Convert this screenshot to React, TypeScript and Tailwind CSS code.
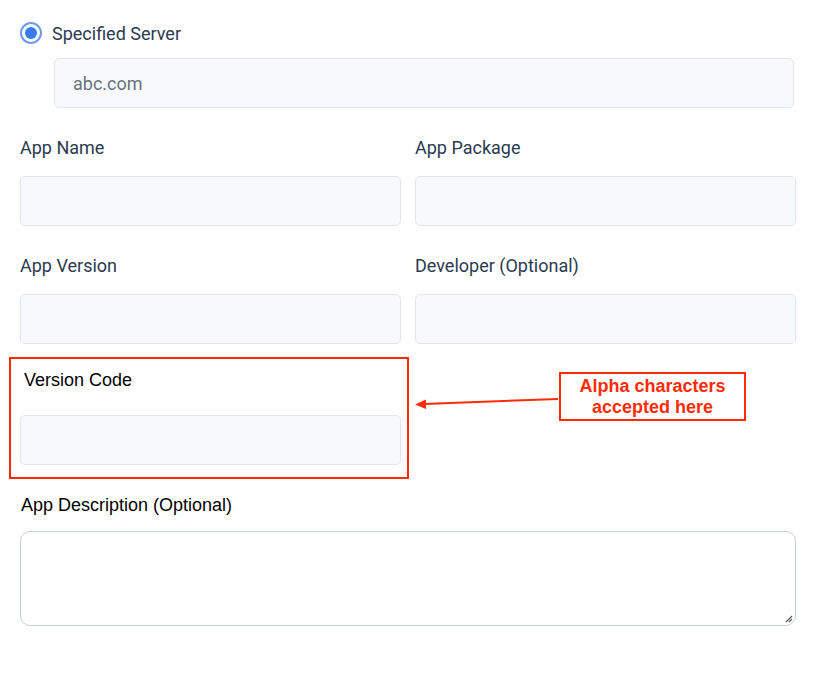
export default function App() {
  const label = "h-5 text-[18px] leading-5 text-[#2b3a50]";
  const input = "h-[50px] w-full rounded-[5px] border border-[#e3e5ea] bg-[#f8f9fb]";

  return (
    <div className="relative h-[698px] w-[817px] bg-white font-['Roboto',sans-serif]">
      <div className="pl-5 pr-[21px] pt-[22px]">
        <div className="flex h-[22px] items-center gap-[10px]">
          <span className="flex h-[22px] w-[22px] items-center justify-center rounded-full border-2 border-[#6b9cf5] bg-white">
            <span className="h-[12px] w-[12px] rounded-full bg-[#3b7bf0]" />
          </span>
          <span className="text-[18px] text-[#2b3a50]">Specified Server</span>
        </div>
        <div className="ml-[34px] mt-[14px] flex h-[50px] w-[740px] items-center rounded-[5px] border border-[#e3e5ea] bg-[#f8f9fb] pl-[18px] text-[18px] text-[#6b7280]">
          abc.com
        </div>

        <div className="mt-[30px] grid grid-cols-2 gap-x-[14px]">
          <div>
            <div className={label}>App Name</div>
            <div className={`mt-[18px] ${input}`} />
          </div>
          <div>
            <div className={label}>App Package</div>
            <div className={`mt-[18px] ${input}`} />
          </div>
          <div className="mt-[30px]">
            <div className={label}>App Version</div>
            <div className={`mt-[18px] ${input}`} />
          </div>
          <div className="mt-[30px]">
            <div className={label}>Developer (Optional)</div>
            <div className={`mt-[18px] ${input}`} />
          </div>
          <div className="-ml-[11px] -mr-[8px] mt-[13px] border-2 border-[#ff2b06] pb-[12px] pl-[9px] pr-[6px] pt-[11px]">
            <div className="ml-1 h-5 font-['Liberation_Sans',Arial,sans-serif] text-[18px] leading-5 text-black">
              Version Code
            </div>
            <div className={`mt-[25px] ${input}`} />
          </div>
          <div />
        </div>

        <div className="ml-px mt-4 h-5 font-['Liberation_Sans',Arial,sans-serif] text-[18px] leading-5 text-black">
          App Description (Optional)
        </div>
        <div className="relative mt-4 h-[95px] w-[776px] rounded-[10px] border border-[#c9d0da] bg-white">
          <svg className="absolute bottom-[2px] right-[2px]" width="9" height="9" viewBox="0 0 9 9">
            <path d="M8 2 L2 8 M8 5 L5 8" stroke="#555" strokeWidth="1.2" />
          </svg>
        </div>
      </div>

      {/* annotation */}
      <svg className="absolute left-0 top-0" width="817" height="698" pointerEvents="none">
        <line x1="558" y1="399" x2="424" y2="404" stroke="#ff2b06" strokeWidth="2" />
        <polygon points="415,404.5 426,399.5 426,409" fill="#ff2b06" />
      </svg>
      <div className="absolute left-[559px] top-[372px] flex h-[49px] w-[187px] flex-col items-center justify-center border-2 border-[#ff2b06] font-['Liberation_Sans',Arial,sans-serif] text-[18px] font-bold leading-[21px] text-[#ff2b06]">
        <span>Alpha characters</span>
        <span>accepted here</span>
      </div>
    </div>
  );
}
